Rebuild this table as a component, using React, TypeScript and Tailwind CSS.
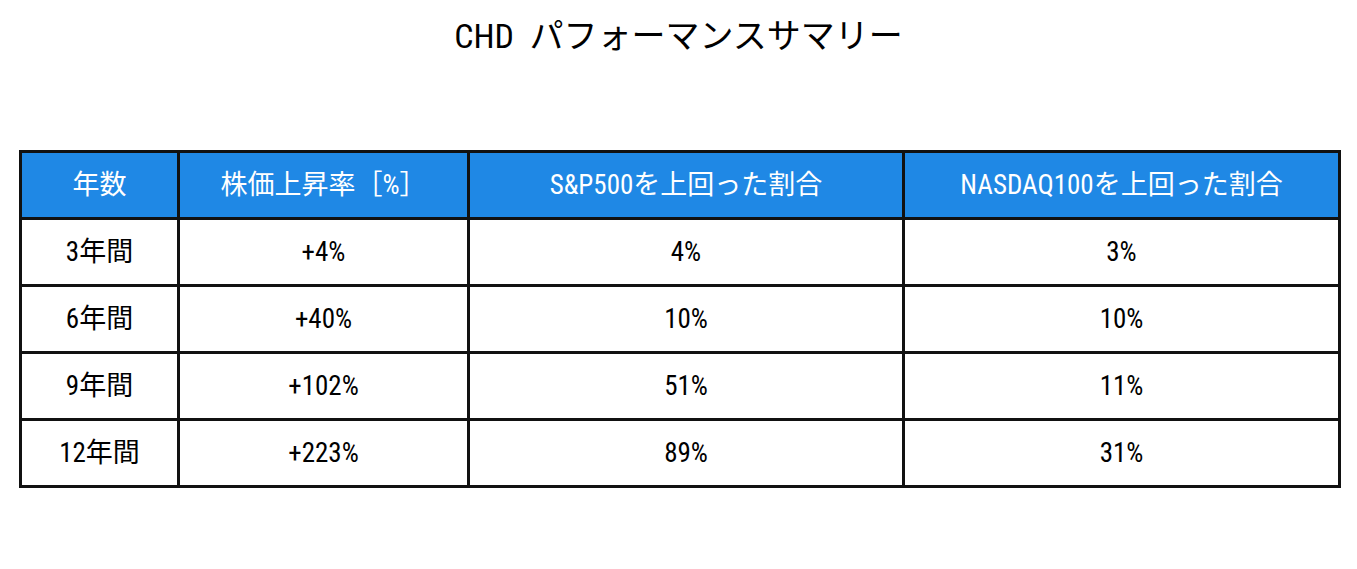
import React from "react";

const rows = [
  ["3年間", "+4%", "4%", "3%"],
  ["6年間", "+40%", "10%", "10%"],
  ["9年間", "+102%", "51%", "11%"],
  ["12年間", "+223%", "89%", "31%"],
];

const headers = ["年数", "株価上昇率［%］", "S&P500を上回った割合", "NASDAQ100を上回った割合"];

export default function App() {
  return (
    <div className="w-[1357px] h-[569px] bg-white text-black flex flex-col font-['Roboto_Condensed','Noto_Sans_CJK_JP',sans-serif]">
      <div className="h-[150px] flex justify-center pt-[11px]">
        <h1 className="text-[34px] leading-[50px] font-normal">CHD&nbsp; パフォーマンスサマリー</h1>
      </div>
      <div className="pl-[19px]">
        <table className="w-[1319px] border-collapse table-fixed">
          <colgroup>
            <col className="w-[158px]" />
            <col className="w-[290px]" />
            <col className="w-[435px]" />
            <col className="w-[436px]" />
          </colgroup>
          <thead>
            <tr className="h-[67px]">
              {headers.map((h) => (
                <th
                  key={h}
                  className="border-[3px] border-[#111] bg-[#1f88e5] text-white font-normal text-[27px] text-center p-0"
                >
                  {h}
                </th>
              ))}
            </tr>
          </thead>
          <tbody>
            {rows.map((r) => (
              <tr key={r[0]} className="h-[67px]">
                {r.map((c, i) => (
                  <td
                    key={i}
                    className="border-[3px] border-[#111] text-center text-[27px] p-0"
                  >
                    {c}
                  </td>
                ))}
              </tr>
            ))}
          </tbody>
        </table>
      </div>
    </div>
  );
}
